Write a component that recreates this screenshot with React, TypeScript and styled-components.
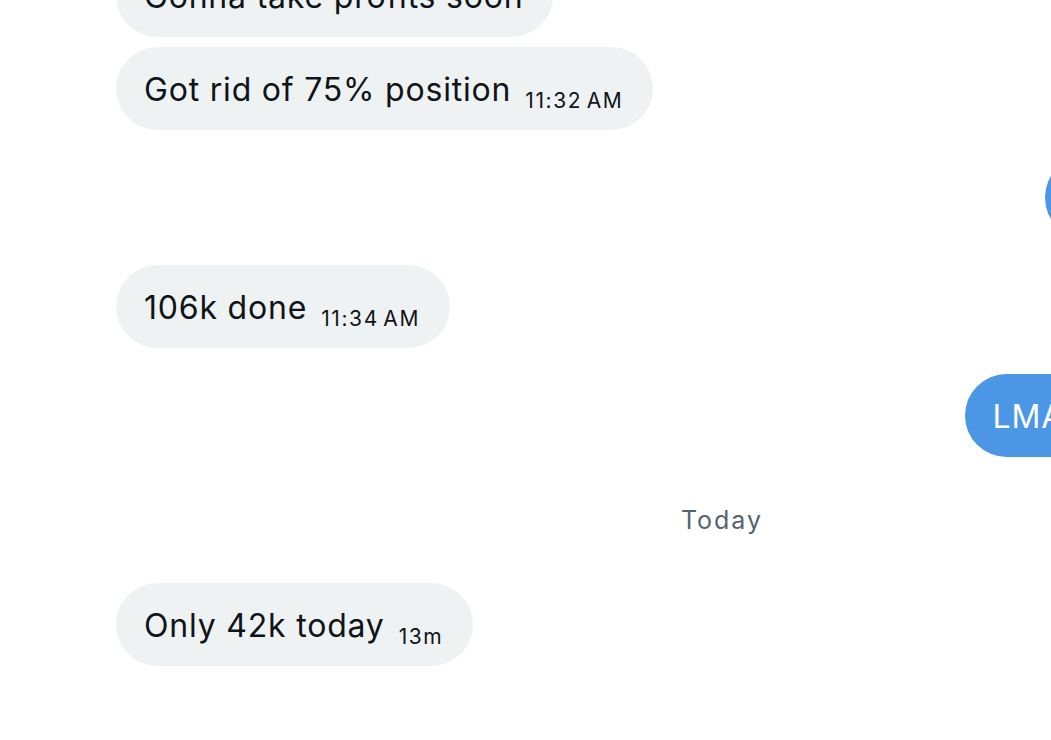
import React from "react";
import styled, { createGlobalStyle } from "styled-components";

const Global = createGlobalStyle`
  html, body { margin: 0; padding: 0; background: #ffffff; }
  body { font-family: Inter, "Liberation Sans", Arial, sans-serif; }
`;

const Page = styled.div`
  width: 1051px;
  height: 740px;
  overflow: hidden;
  background: #ffffff;
`;

const Thread = styled.div`
  width: 1244px;
  margin: -46px 0 0 100px;
  padding: 0 16px;
  box-sizing: border-box;
  display: flex;
  flex-direction: column;
`;

const Group = styled.div<{ $side: "in" | "out" }>`
  display: flex;
  flex-direction: column;
  align-items: ${(p) => (p.$side === "in" ? "flex-start" : "flex-end")};
  gap: 10px;
  margin-bottom: 26px;
`;

const Bubble = styled.div<{ $side: "in" | "out" }>`
  height: 83px;
  box-sizing: border-box;
  padding: 0 30px 0 28px;
  border-radius: 42px;
  display: flex;
  align-items: center;
  white-space: nowrap;
  background: ${(p) => (p.$side === "in" ? "#eff2f3" : "#4b97e5")};
  color: ${(p) => (p.$side === "in" ? "#0f1419" : "#ffffff")};
`;

const Line = styled.span`
  font-size: 32px;
  line-height: 40px;
  letter-spacing: 0.8px;
  padding-top: 2px;
`;

const Time = styled.span`
  font-size: 21px;
  line-height: 0;
  letter-spacing: 1.6px;
  word-spacing: -3px;
  margin-left: 14px;
  vertical-align: -7px;
`;

const Divider = styled.div`
  height: 74px;
  margin-bottom: 26px;
  display: flex;
  align-items: center;
  justify-content: center;
  color: #536471;
  font-size: 25px;
  letter-spacing: 2px;
`;

type Msg = { text: string; time?: string };

const Message = ({ side, msg }: { side: "in" | "out"; msg: Msg }) => (
  <Bubble $side={side}>
    <Line>
      {msg.text}
      {msg.time && <Time>{msg.time}</Time>}
    </Line>
  </Bubble>
);

const groups: { side: "in" | "out"; msgs: Msg[] }[] = [
  {
    side: "in",
    msgs: [
      { text: "Gonna take profits soon" },
      { text: "Got rid of 75% position", time: "11:32 AM" },
    ],
  },
  { side: "out", msgs: [{ text: "Nice af", time: "11:33 AM" }] },
  { side: "in", msgs: [{ text: "106k done", time: "11:34 AM" }] },
  { side: "out", msgs: [{ text: "LMAO crazy", time: "11:35 AM" }] },
];

export default function App() {
  return (
    <>
      <Global />
      <Page>
        <Thread>
          {groups.map((g, i) => (
            <Group key={i} $side={g.side}>
              {g.msgs.map((m, j) => (
                <Message key={j} side={g.side} msg={m} />
              ))}
            </Group>
          ))}
          <Divider>Today</Divider>
          <Group $side="in">
            <Message side="in" msg={{ text: "Only 42k today", time: "13m" }} />
          </Group>
        </Thread>
      </Page>
    </>
  );
}
